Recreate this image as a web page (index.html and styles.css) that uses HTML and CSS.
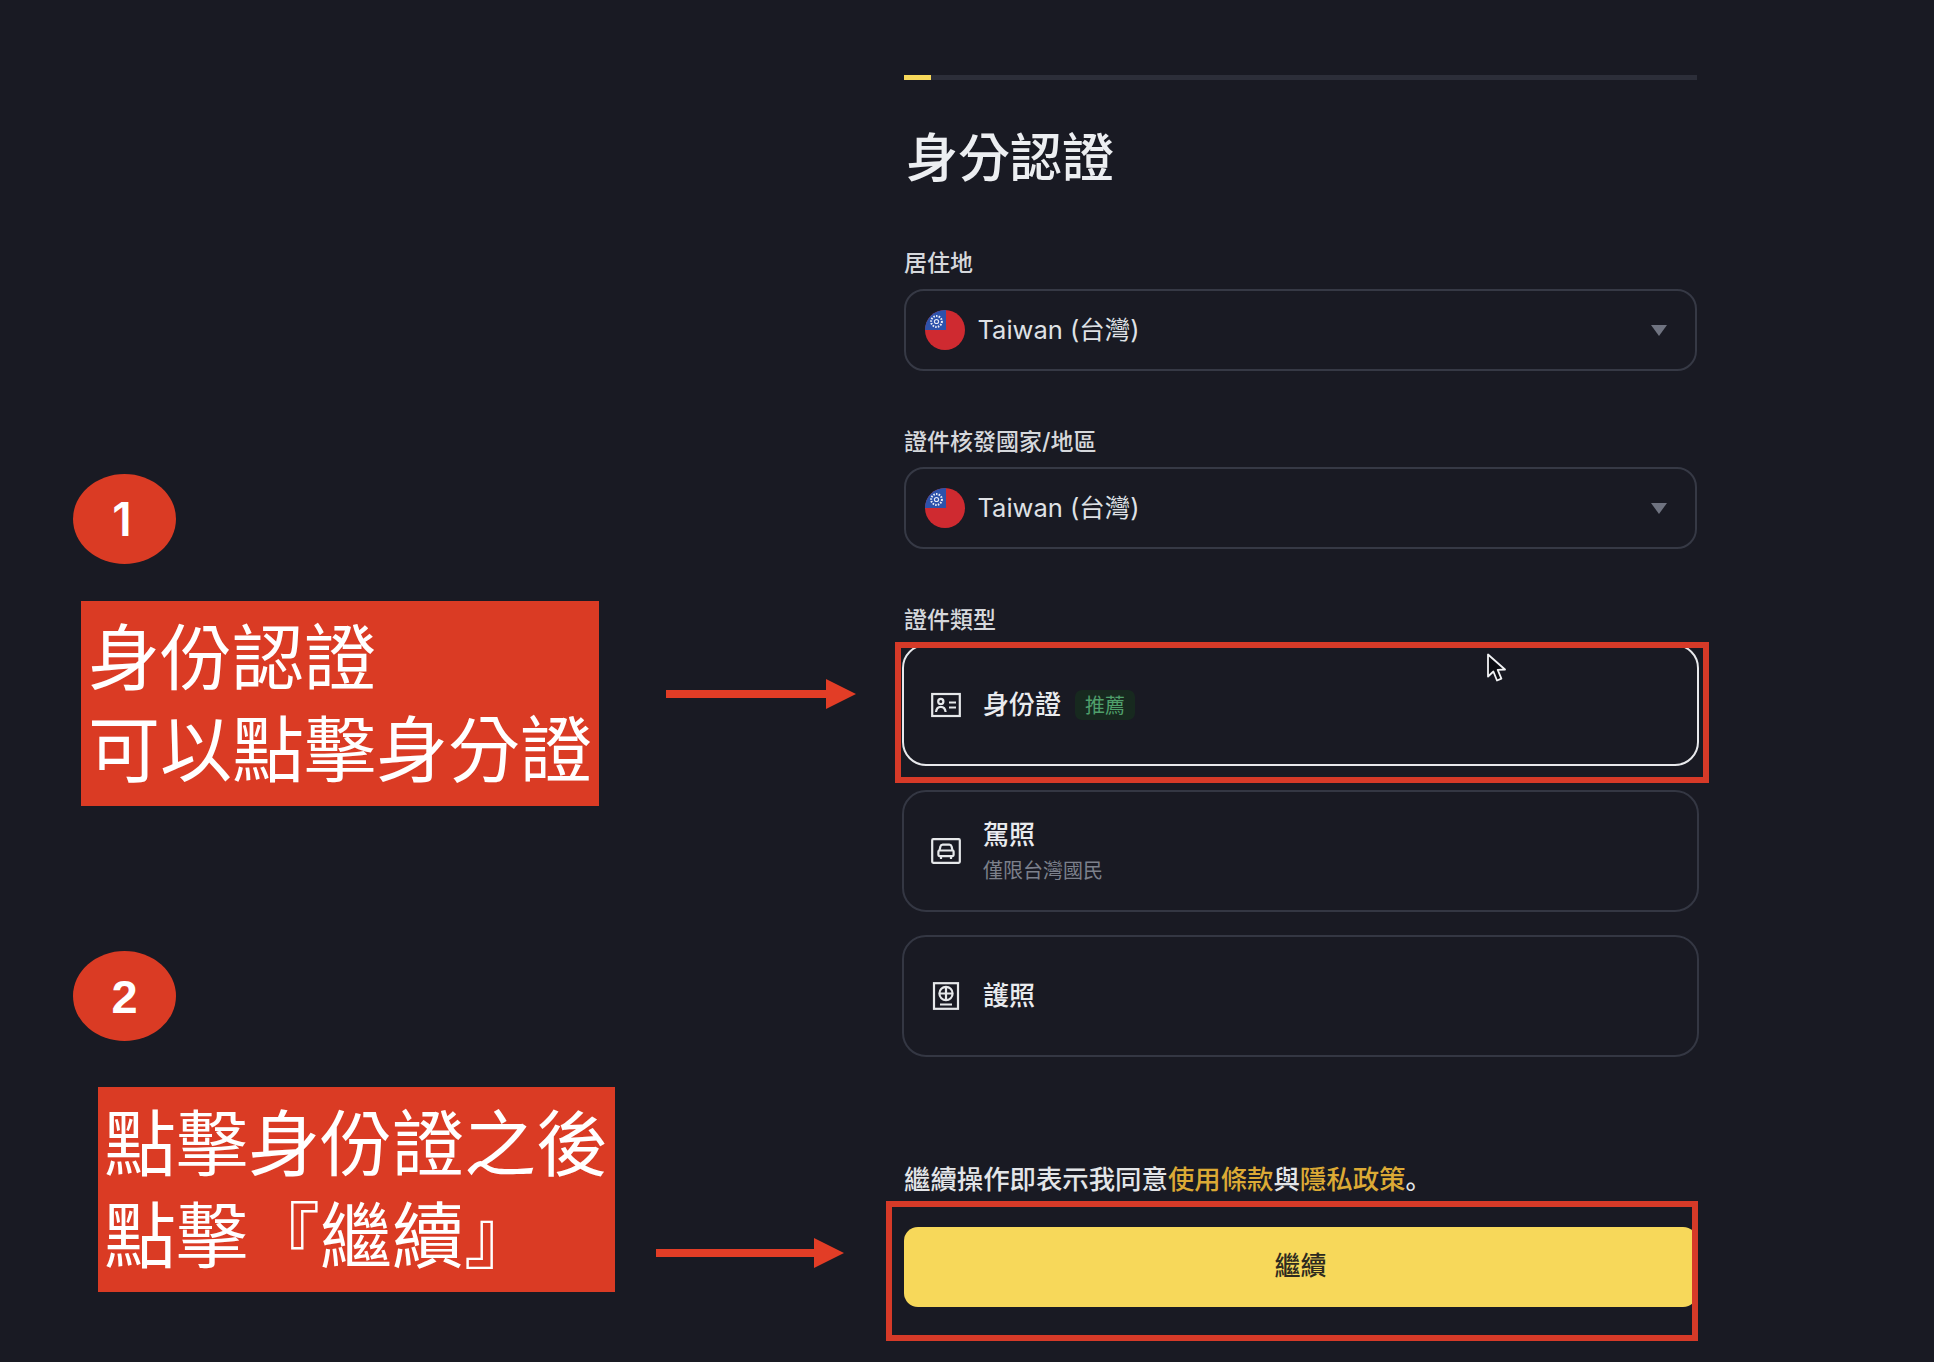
FILE: index.html
```html
<!DOCTYPE html>
<html lang="zh-Hant">
<head>
<meta charset="utf-8">
<title>身分認證</title>
<link rel="stylesheet" href="styles.css">
</head>
<body>
<svg class="defs" width="0" height="0" aria-hidden="true">
  <defs>
    <clipPath id="flag-clip"><circle cx="20" cy="20" r="20"/></clipPath>
    <symbol id="flag" viewBox="0 0 40 40">
      <g clip-path="url(#flag-clip)">
        <rect width="40" height="40" fill="#cf2a30"/>
        <rect width="21" height="20" fill="#2d52ab"/>
        <circle cx="11.5" cy="11.5" r="5.4" fill="none" stroke="#e8ecf6" stroke-width="2" stroke-dasharray="1.5 1.2"/>
        <circle cx="11.5" cy="11.5" r="2.6" fill="#e8ecf6"/>
        <circle cx="11.5" cy="11.5" r="1.5" fill="#2d52ab"/>
      </g>
    </symbol>
  </defs>
</svg>
<main class="page">
  <aside class="notes">
    <section class="note note-one">
      <div class="badge-num badge-one">1</div>
      <div class="note-row">
        <p class="note-box note-box-one">身份認證<br>可以點擊身分證</p>
        <svg class="arrow arrow-one" width="190" height="30" viewBox="0 0 190 30"><path d="M0 11h160V0l30 15-30 15V19H0z" fill="#e23d26"/></svg>
      </div>
    </section>
    <section class="note note-two">
      <div class="badge-num">2</div>
      <div class="note-row">
        <p class="note-box note-box-two">點擊身份證之後<br>點擊『繼續』</p>
        <svg class="arrow arrow-two" width="188" height="30" viewBox="0 0 188 30"><path d="M0 11h158V0l30 15-30 15V19H0z" fill="#e23d26"/></svg>
      </div>
    </section>
  </aside>

  <section class="form">
    <div class="progress"><div class="progress-fill"></div></div>
    <h1 class="title">身分認證</h1>

    <label class="label label-first">居住地</label>
    <div class="select">
      <svg class="flag" width="40" height="40"><use href="#flag"/></svg>
      <span class="select-text">Taiwan (台灣)</span>
      <span class="caret"></span>
    </div>

    <label class="label">證件核發國家/地區</label>
    <div class="select">
      <svg class="flag" width="40" height="40"><use href="#flag"/></svg>
      <span class="select-text">Taiwan (台灣)</span>
      <span class="caret"></span>
    </div>

    <label class="label label-third">證件類型</label>
    <div class="options">
      <div class="option option-active">
        <svg class="opt-icon" width="30" height="26" viewBox="0 0 30 26" fill="none" stroke="#e6e8ea" stroke-width="2.2">
          <rect x="1.2" y="2" width="27.6" height="22"/>
          <circle cx="9.8" cy="9.4" r="2.6"/>
          <path d="M5 20c.4-3.6 2.2-5.2 4.8-5.2s4.4 1.6 4.8 5.2"/>
          <path d="M18 10.5h7M18 15.5h7"/>
        </svg>
        <div class="opt-body">
          <div class="opt-line"><span class="opt-name">身份證</span><span class="tag">推薦</span></div>
        </div>
        <div class="frame frame-option"></div>
        <svg class="cursor" width="20" height="30" viewBox="0 0 20 30"><path d="M2 1.5v22l5.4-5 3.6 9 4.4-1.9-3.7-8.7 7.3-.4z" fill="#0c0d12" stroke="#f2f3f5" stroke-width="1.8" stroke-linejoin="round"/></svg>
      </div>
      <div class="option">
        <svg class="opt-icon" width="30" height="26" viewBox="0 0 30 26" fill="none" stroke="#e6e8ea" stroke-width="2.2">
          <rect x="1.2" y="1.2" width="27.6" height="23.6" rx="1"/>
          <path d="M8.5 12.5l.9-4a2.4 2.4 0 0 1 2.3-1.8h6.6a2.4 2.4 0 0 1 2.3 1.8l.9 4"/>
          <rect x="7.4" y="12.5" width="15.2" height="5.6" rx="1"/>
          <path d="M10 18.1v2.9M20 18.1v2.9"/>
        </svg>
        <div class="opt-body opt-body-two">
          <div class="opt-line"><span class="opt-name">駕照</span></div>
          <div class="opt-sub">僅限台灣國民</div>
        </div>
      </div>
      <div class="option">
        <svg class="opt-icon" width="30" height="28" viewBox="0 0 30 28" fill="none" stroke="#e6e8ea" stroke-width="2.2">
          <rect x="3" y="1.2" width="24" height="25.6"/>
          <circle cx="15" cy="11.5" r="6.6"/>
          <path d="M8.4 11.5h13.2M15 4.9v13.2M9 22.5h12"/>
        </svg>
        <div class="opt-body">
          <div class="opt-line"><span class="opt-name">護照</span></div>
        </div>
      </div>
    </div>

    <p class="terms">繼續操作即表示我同意<a class="link" href="#">使用條款</a>與<a class="link" href="#">隱私政策</a><span class="stop" lang="zh-Hans">。</span></p>

    <div class="action">
      <button class="continue" type="button">繼續</button>
      <div class="frame frame-action"></div>
    </div>
  </section>
</main>
</body>
</html>
```
FILE: styles.css
```css
* { box-sizing: border-box; }

html, body {
  margin: 0;
  padding: 0;
  background: #191a23;
}

.defs { position: absolute; }

.page {
  display: flex;
  width: 1934px;
  height: 1362px;
  overflow: hidden;
  background: #191a23;
  color: #e9ebee;
  font-family: "Inter", "Noto Sans CJK TC", sans-serif;
}

/* annotations on the left */
.notes {
  flex: 0 0 904px;
  padding: 474px 0 0 73px;
  display: flex;
  flex-direction: column;
  font-family: "Liberation Sans", "Noto Sans CJK TC", sans-serif;
}

.note { display: flex; flex-direction: column; }
.note-two { margin-top: 145px; }

.badge-num {
  width: 103px;
  height: 90px;
  border-radius: 50%;
  background: #da3b24;
  color: #fff;
  font-size: 47px;
  font-weight: 700;
  display: flex;
  align-items: center;
  justify-content: center;
}

.badge-one {
  padding-right: 5px;
  font-family: "Inter", sans-serif;
  font-weight: 600;
  font-size: 46px;
}

.note-row {
  display: flex;
  align-items: center;
  margin-top: 37px;
}
.note-two .note-row { margin-top: 46px; }

.note-box {
  margin: 0;
  height: 205px;
  background: #da3b24;
  color: #fff;
  font-family: "Noto Sans CJK TC", sans-serif;
  font-size: 72px;
  line-height: 92px;
  white-space: nowrap;
}

.note-box-one {
  width: 518px;
  margin-left: 8px;
  padding: 6px 0 0 7px;
}

.note-box-two {
  width: 517px;
  margin-left: 25px;
  padding: 6px 0 0 6px;
}

.arrow { flex: none; }
.arrow-one { margin: 0 0 20px 67px; }
.arrow-two { margin: 126px 0 0 41px; }

/* form column */
.form {
  flex: 0 0 793px;
  padding-top: 75px;
  display: flex;
  flex-direction: column;
}

.progress {
  height: 5px;
  background: #2c2e39;
}
.progress-fill {
  width: 27px;
  height: 100%;
  background: #f7d85a;
}

.title {
  margin: 43px 0 0 2px;
  font-size: 52px;
  line-height: 72px;
  font-weight: 500;
  color: #eceef1;
}

.label {
  display: block;
  margin-top: 55px;
  margin-bottom: 9px;
  font-size: 23px;
  line-height: 32px;
  font-weight: 500;
  color: #d6d8dc;
}
.label-first { margin-top: 52px; margin-bottom: 10px; }
.label-third { margin-top: 55px; margin-bottom: 8px; }

.select {
  height: 82px;
  display: flex;
  align-items: center;
  padding: 0 28px 0 18.5px;
  border: 2.5px solid #363945;
  border-radius: 20px;
}

.flag { flex: none; }

.select-text {
  margin-left: 13px;
  padding-bottom: 6px;
  font-size: 25.5px;
  font-weight: 400;
  color: #dfe1e5;
}

.caret {
  margin-left: auto;
  width: 0;
  height: 0;
  border-left: 8px solid transparent;
  border-right: 8px solid transparent;
  border-top: 11px solid #6f7380;
}

.options {
  margin: 0 -1.5px 0 -2.5px;
  display: flex;
  flex-direction: column;
  gap: 23.5px;
}

.option {
  position: relative;
  height: 122px;
  display: flex;
  align-items: center;
  padding: 0 0 0 27.5px;
  border: 2.5px solid #343743;
  border-radius: 24px;
}

.option-active { border-color: #e8e9ec; }

.opt-icon { flex: none; }

.opt-body {
  margin-left: 22px;
  display: flex;
  flex-direction: column;
  gap: 7px;
}
.opt-body-two { padding-top: 3px; }

.opt-line {
  display: flex;
  align-items: center;
  gap: 14px;
}

.opt-name {
  font-size: 26px;
  line-height: 30px;
  font-weight: 500;
  color: #e9ebee;
}

.tag {
  height: 30px;
  padding: 0 10px 2px;
  display: flex;
  align-items: center;
  border-radius: 7px;
  background: #17291f;
  color: #4f9f6b;
  font-size: 20px;
}

.opt-sub {
  font-size: 20px;
  line-height: 28px;
  color: #7c808b;
}

.frame {
  position: absolute;
  border: 6px solid #d63a28;
  pointer-events: none;
}

.frame-option {
  top: -4.5px;
  bottom: -18.5px;
  left: -8.5px;
  right: -12px;
}

.cursor {
  position: absolute;
  top: 7px;
  left: 582px;
}

.terms {
  margin: 103px 0 0;
  font-size: 26.4px;
  line-height: 36px;
  font-weight: 500;
  color: #e3e5e8;
  white-space: nowrap;
}

.link {
  color: #dcaa35;
  text-decoration: none;
}

.stop { font-family: "Noto Sans CJK SC", sans-serif; }

.action {
  position: relative;
  margin-top: 30px;
}

.continue {
  display: block;
  width: 100%;
  height: 80px;
  padding: 0 0 8px;
  border: 0;
  border-radius: 14px;
  background: #f7d85a;
  color: #2e2b1f;
  font-family: inherit;
  font-size: 26px;
  font-weight: 500;
}

.frame-action {
  top: -26px;
  bottom: -34px;
  left: -18px;
  right: -1px;
}
```
